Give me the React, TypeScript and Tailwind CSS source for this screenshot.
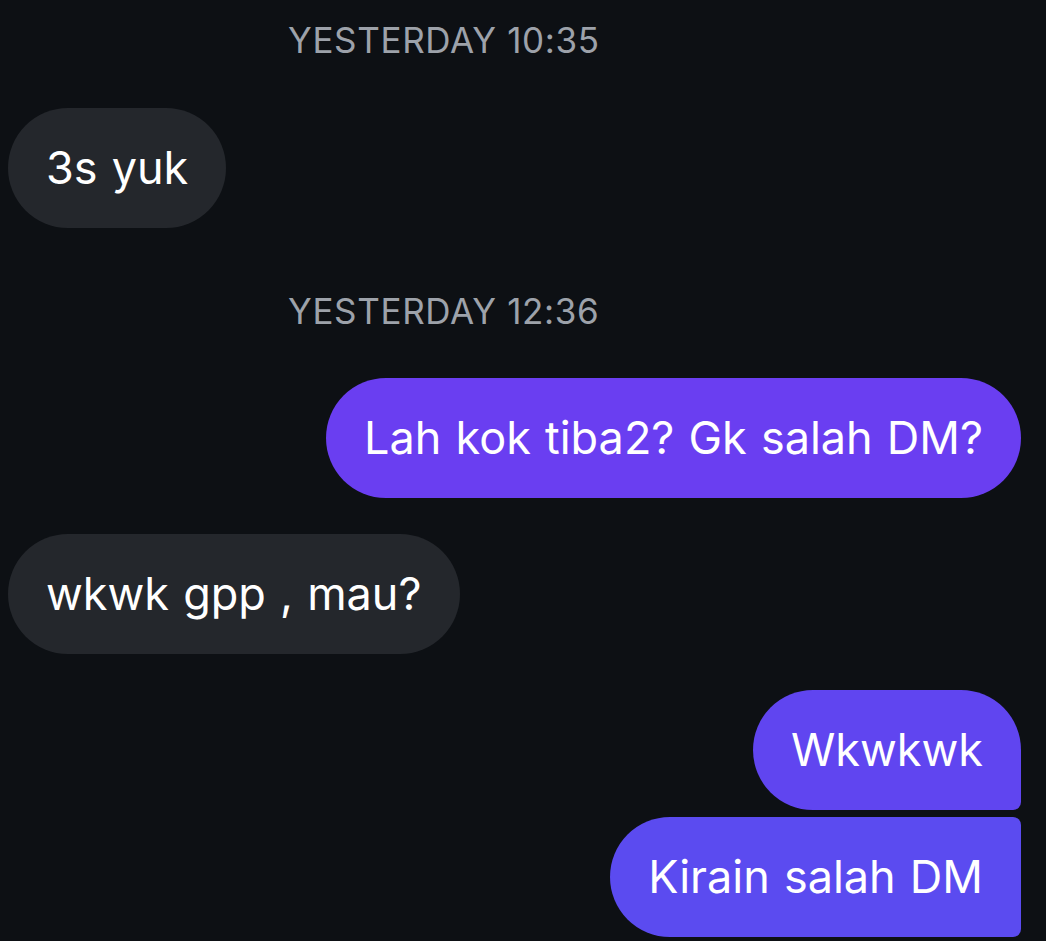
import React from "react";

type Msg =
  | { kind: "time"; text: string; mt: string }
  | { kind: "in"; text: string; mt: string }
  | { kind: "out"; text: string; mt: string; shape: string; color: string };

const messages: Msg[] = [
  { kind: "time", text: "YESTERDAY 10:35", mt: "mt-[20px]" },
  { kind: "in", text: "3s yuk", mt: "mt-[48px]" },
  { kind: "time", text: "YESTERDAY 12:36", mt: "mt-[63px]" },
  {
    kind: "out",
    text: "Lah kok tiba2? Gk salah DM?",
    mt: "mt-[47px]",
    shape: "rounded-[60px]",
    color: "bg-[#6a3ef1]",
  },
  { kind: "in", text: "wkwk gpp , mau?", mt: "mt-[36px]" },
  {
    kind: "out",
    text: "Wkwkwk",
    mt: "mt-[36px]",
    shape: "rounded-[60px] rounded-br-[8px]",
    color: "bg-[#6045f0]",
  },
  {
    kind: "out",
    text: "Kirain salah DM",
    mt: "mt-[7px]",
    shape: "rounded-l-[60px] rounded-r-[8px]",
    color: "bg-[#5b4bf0]",
  },
];

export default function App() {
  return (
    <div
      className="w-[1046px] h-[941px] overflow-hidden bg-[#0d1014] flex flex-col"
      style={{ fontFamily: "Inter, 'Noto Sans', sans-serif" }}
    >
      {messages.map((m, i) => {
        if (m.kind === "time") {
          return (
            <div
              key={i}
              className={`${m.mt} pl-[288px] h-[40px] leading-[40px] text-[35px] tracking-[0.65px] text-[#9da2aa]`}
            >
              {m.text}
            </div>
          );
        }
        if (m.kind === "in") {
          return (
            <div key={i} className={`${m.mt} flex pl-[8px]`}>
              <div className="h-[120px] px-[38px] flex items-center rounded-[60px] bg-[#24272c] text-white text-[45px] [word-spacing:1.5px]">
                {m.text}
              </div>
            </div>
          );
        }
        return (
          <div key={i} className={`${m.mt} flex justify-end pr-[25px]`}>
            <div
              className={`h-[120px] px-[38px] flex items-center text-white text-[45px] [word-spacing:1.5px] ${m.shape} ${m.color}`}
            >
              {m.text}
            </div>
          </div>
        );
      })}
    </div>
  );
}
